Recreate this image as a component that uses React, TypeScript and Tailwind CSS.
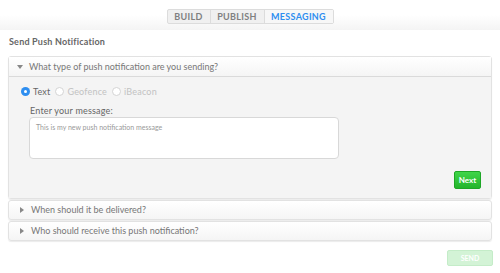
import React from "react";

function Caret({ down }: { down?: boolean }) {
  return down ? (
    <svg width="6" height="4" viewBox="0 0 6 4" className="shrink-0">
      <path d="M0 0 L6 0 L3 4 Z" fill="#888" />
    </svg>
  ) : (
    <svg width="4" height="6" viewBox="0 0 4 6" className="shrink-0">
      <path d="M0 0 L4 3 L0 6 Z" fill="#888" />
    </svg>
  );
}

function Radio({ checked, label }: { checked?: boolean; label: string }) {
  return (
    <div className="flex items-center gap-[3px]">
      {checked ? (
        <span className="w-[9px] h-[9px] rounded-full bg-[#2e8ef0] flex items-center justify-center">
          <span className="w-[3px] h-[3px] rounded-full bg-white" />
        </span>
      ) : (
        <span className="w-[9px] h-[9px] rounded-full border border-[#d4d4d4] bg-white" />
      )}
      <span className={checked ? "text-[#666]" : "text-[#c2c2c2]"}>{label}</span>
    </div>
  );
}

export default function App() {
  return (
    <div
      className="w-[500px] h-[273px] bg-white relative overflow-hidden text-[9px]"
      style={{ fontFamily: "Lato, 'Open Sans', sans-serif" }}
    >
      <div className="h-[30px] bg-gradient-to-b from-white via-white to-[#f4f4f4] flex justify-center pt-[9px]">
        <div className="flex h-[15px] border border-[#dcdcdc] rounded-[2px] bg-[#f0f0f0] font-bold text-[9px] tracking-[0.3px]">
          <div className="w-[43px] flex items-center justify-center text-[#808080] border-r border-[#dcdcdc]">BUILD</div>
          <div className="w-[54px] flex items-center justify-center text-[#808080] border-r border-[#dcdcdc]">PUBLISH</div>
          <div className="w-[68px] flex items-center justify-center text-[#2e8ef0] bg-[#f7f7f7]">MESSAGING</div>
        </div>
      </div>
      <div className="px-[8px]">
        <div className="pl-[1px] pt-[5px] h-[26px] font-bold text-[#666] text-[9px] tracking-[0.2px]">Send Push Notification</div>
        <div className="border border-[#e2e2e2] rounded-[3px] shadow-[0_1px_1px_rgba(0,0,0,0.08)]">
          <div className="h-[20px] flex items-center gap-[6px] pl-[8px] bg-gradient-to-b from-white to-[#f5f5f5] border-b border-[#dadada] text-[#777]">
            <Caret down />
            <span>What type of push notification are you sending?</span>
          </div>
          <div className="bg-[#f4f4f4] h-[121px] pt-[8px] px-[12px] flex flex-col">
            <div className="flex items-center gap-[5px] tracking-[0.2px]">
              <Radio checked label="Text" />
              <Radio label="Geofence" />
              <Radio label="iBeacon" />
            </div>
            <div className="pl-[9px] mt-[5px] text-[#666] tracking-[0.2px]">Enter your message:</div>
            <div className="ml-[8px] mt-[0px] w-[310px] h-[42px] bg-white border border-[#d8d8d8] rounded-[4px] px-[6px] pt-[4px] text-[7px] text-[#999]">
              This is my new push notification message
            </div>
            <div className="flex justify-end mt-[12px]">
              <div className="w-[27px] h-[18px] rounded-[2px] bg-gradient-to-b from-[#3fd548] to-[#22b52b] border border-[#1ea626] text-white font-bold text-[8px] flex items-center justify-center mr-[-2px]">
                Next
              </div>
            </div>
          </div>
        </div>
        <div className="mt-[1px] h-[20px] border border-[#e2e2e2] rounded-[3px] bg-gradient-to-b from-white to-[#f5f5f5] shadow-[0_1px_1px_rgba(0,0,0,0.08)] flex items-center gap-[7px] pl-[11px] text-[#777]">
          <Caret />
          <span>When should it be delivered?</span>
        </div>
        <div className="mt-[1px] h-[20px] border border-[#e2e2e2] rounded-[3px] bg-gradient-to-b from-white to-[#f5f5f5] shadow-[0_1px_1px_rgba(0,0,0,0.08)] flex items-center gap-[7px] pl-[11px] text-[#777]">
          <Caret />
          <span>Who should receive this push notification?</span>
        </div>
        <div className="flex justify-end mt-[9px] mr-[-1px]">
          <div className="w-[46px] h-[16px] rounded-[2px] bg-[#d3f3d6] border border-[#c4ecc8] text-white font-bold text-[7px] flex items-center justify-center">
            SEND
          </div>
        </div>
      </div>
    </div>
  );
}
